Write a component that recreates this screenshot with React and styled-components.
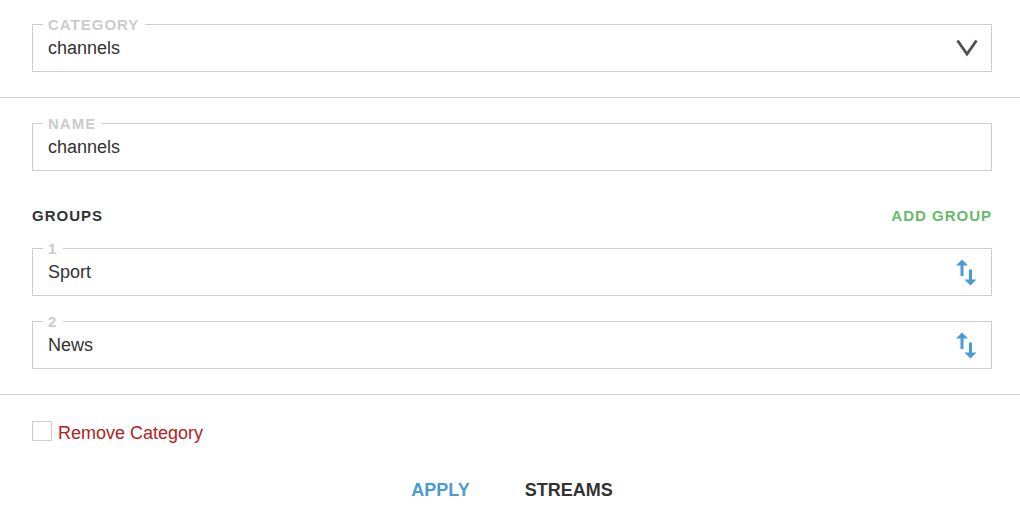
import React, { useState } from "react";
import styled, { createGlobalStyle } from "styled-components";

const color = {
  line: "#cccccc",
  text: "#333333",
  blue: "#4a9bd4",
  green: "#66bb6a",
  red: "#b22222",
};

const GlobalStyle = createGlobalStyle`
  *, *::before, *::after { box-sizing: border-box; }
  body {
    margin: 0;
    background: #ffffff;
    color: ${color.text};
    font-family: "Liberation Sans", Arial, sans-serif;
    font-size: 18px;
    line-height: 20px;
  }
  button, input, select { font: inherit; color: inherit; }
`;

const Form = styled.form`
  width: 100%;
`;

const Section = styled.section`
  display: flex;
  flex-direction: column;
  gap: 25px;
  padding: ${(p) => (p.$first ? 24 : 25)}px 28px 25px 32px;
  border-bottom: ${(p) => (p.$last ? "none" : `1px solid ${color.line}`)};
`;

const FieldBox = styled.div`
  position: relative;
  display: flex;
  align-items: stretch;
  height: 48px;
  border: 1px solid ${color.line};
`;

const FieldLabel = styled.label`
  position: absolute;
  top: -9px;
  left: 10px;
  padding: 0 6px 0 5px;
  background: #ffffff;
  color: ${color.line};
  font-size: 15px;
  font-weight: 700;
  line-height: 18px;
  letter-spacing: 1px;
  text-transform: uppercase;
`;

const TextInput = styled.input`
  flex: 1;
  min-width: 0;
  padding: 0 15px;
  border: 0;
  outline: 0;
  background: transparent;
`;

const Select = styled.select`
  flex: 1;
  min-width: 0;
  padding: 0 48px 0 15px;
  border: 0;
  outline: 0;
  background: transparent;
  appearance: none;
`;

const ChevronIcon = styled.svg`
  position: absolute;
  right: 13px;
  top: 14px;
  pointer-events: none;
`;

const SortButton = styled.button`
  display: flex;
  align-items: center;
  padding: 0 14px;
  border: 0;
  background: transparent;
  color: ${color.blue};
  cursor: pointer;
`;

const GroupsHeader = styled.div`
  display: flex;
  align-items: center;
  justify-content: space-between;
  padding-top: 12px;
  font-size: 15px;
  line-height: 15px;
  letter-spacing: 1px;
`;

const Heading = styled.h2`
  margin: 0;
  font-size: 15px;
  font-weight: 700;
`;

const AddButton = styled.button`
  padding: 0;
  border: 0;
  background: transparent;
  color: ${color.green};
  font-weight: 700;
  letter-spacing: 1px;
  cursor: pointer;
`;

const RemoveRow = styled.div`
  display: flex;
  align-items: flex-start;
  gap: 6px;
  padding-top: 1px;
  color: ${color.red};
`;

const RemoveLabel = styled.label`
  line-height: 24px;
`;

const Checkbox = styled.input`
  appearance: none;
  width: 20px;
  height: 20px;
  margin: 0;
  border: 1px solid ${color.line};
  background: #ffffff;
  &:checked { background: ${color.red}; }
`;

const Actions = styled.div`
  display: flex;
  justify-content: center;
  gap: 55px;
  padding-top: 10px;
`;

const ActionButton = styled.button`
  padding: 0;
  border: 0;
  background: transparent;
  color: ${(p) => (p.$primary ? color.blue : color.text)};
  font-weight: 700;
  cursor: pointer;
`;

function SortIcon() {
  return (
    <svg width="22" height="28" viewBox="0 0 22 28" fill="currentColor" aria-hidden="true">
      <path d="M7 1.5 L13 7.5 H8.5 V18 H5.5 V7.5 H1 Z" />
      <path d="M14 11.5 H17 V21.5 H21.5 L15.5 27.5 L9.5 21.5 H14 Z" />
    </svg>
  );
}

function GroupField({ index, name }) {
  const id = `group-${index}`;
  return (
    <FieldBox>
      <FieldLabel htmlFor={id}>{index}</FieldLabel>
      <TextInput id={id} type="text" defaultValue={name} />
      <SortButton type="button" aria-label={`Move ${name}`}>
        <SortIcon />
      </SortButton>
    </FieldBox>
  );
}

export default function App() {
  const [groups, setGroups] = useState(["Sport", "News"]);

  return (
    <>
      <GlobalStyle />
      <Form onSubmit={(e) => e.preventDefault()}>
        <Section $first>
          <FieldBox>
            <FieldLabel htmlFor="category">Category</FieldLabel>
            <Select id="category" defaultValue="channels">
              <option value="channels">channels</option>
            </Select>
            <ChevronIcon width="22" height="18" viewBox="0 0 22 18" fill="none" aria-hidden="true">
              <path d="M1.5 1.5 L11 15 L20.5 1.5" stroke="#505050" strokeWidth="2.8" />
            </ChevronIcon>
          </FieldBox>
        </Section>

        <Section>
          <FieldBox>
            <FieldLabel htmlFor="name">Name</FieldLabel>
            <TextInput id="name" type="text" defaultValue="channels" />
          </FieldBox>
          <GroupsHeader>
            <Heading>GROUPS</Heading>
            <AddButton type="button" onClick={() => setGroups([...groups, ""])}>
              ADD GROUP
            </AddButton>
          </GroupsHeader>
          {groups.map((name, i) => (
            <GroupField key={i} index={i + 1} name={name} />
          ))}
        </Section>

        <Section $last>
          <RemoveRow>
            <Checkbox id="remove" type="checkbox" />
            <RemoveLabel htmlFor="remove">Remove Category</RemoveLabel>
          </RemoveRow>
          <Actions>
            <ActionButton type="submit" $primary>
              APPLY
            </ActionButton>
            <ActionButton type="button">STREAMS</ActionButton>
          </Actions>
        </Section>
      </Form>
    </>
  );
}
